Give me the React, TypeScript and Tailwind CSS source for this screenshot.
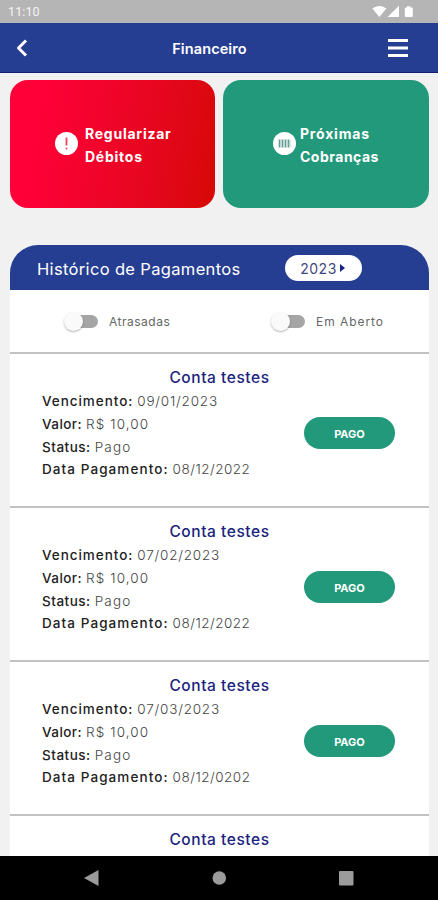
import React from 'react';

type Payment = { due: string; paid: string };

const payments: Payment[] = [
  { due: '09/01/2023', paid: '08/12/2022' },
  { due: '07/02/2023', paid: '08/12/2022' },
  { due: '07/03/2023', paid: '08/12/0202' },
];

function StatusBar() {
  return (
    <div className="flex h-[23px] shrink-0 items-center justify-between bg-[#b5b5b5] pl-2 pr-6">
      <span className="pt-[2px] font-[Roboto,sans-serif] text-[12.5px] leading-none tracking-[0.1px] text-white/85">11:10</span>
      <svg width="42" height="13" viewBox="0 0 42 13" fill="#fff">
        <path d="M.4 3.5C4.4.1 10.300.1 14.300 3.500L7.400 12Z" />
        <path d="M15.500 12H27V.8Z" />
        <path d="M35 1.200h3.500v1.200h1.300q1 0 1 1V11q0 1-1 1h-6q-1 0-1-1V3.400q0-1 1-1H35Z" />
      </svg>
    </div>
  );
}

function Row({ label, value, labelClass, valueClass }: { label: string; value: string; labelClass: string; valueClass: string }) {
  return (
    <p className="flex h-[22.8px] items-center gap-1 whitespace-nowrap text-[13.5px]">
      <span className={`font-medium text-[#222] ${labelClass}`}>{label}</span>
      <span className={`font-light text-[#444] ${valueClass}`}>{value}</span>
    </p>
  );
}

function ItemTitle() {
  return <h2 className="text-center text-[15.500px] font-medium leading-[23px] tracking-[0.55px] text-[#1a237e]">Conta testes</h2>;
}

function PaymentItem({ due, paid }: Payment) {
  return (
    <article className="h-[154px] shrink-0 border-t-2 border-[#c2c2c2] pt-3">
      <ItemTitle />
      <div className="flex justify-between pl-8 pr-[34px]">
        <div className="pt-[0.8px]">
          <Row label="Vencimento:" value={due} labelClass="tracking-[0.95px]" valueClass="tracking-[0.8px]" />
          <Row label="Valor:" value="R$ 10,00" labelClass="tracking-[0.45px]" valueClass="tracking-[1.1px]" />
          <Row label="Status:" value="Pago" labelClass="tracking-[0.5px]" valueClass="tracking-[1.2px]" />
          <Row label="Data Pagamento:" value={paid} labelClass="tracking-[1.08px]" valueClass="tracking-[0.5px]" />
        </div>
        <button className="mt-[28px] flex h-8 w-[91px] items-center justify-center rounded-full bg-[#23997b] pt-[3px] text-[11px] font-bold text-white">PAGO</button>
      </div>
    </article>
  );
}

function Toggle() {
  return (
    <span className="flex h-[20px] w-[35px] items-center">
      <span className="z-10 size-[19px] shrink-0 rounded-full bg-[#fafafa] shadow-[0_1px_2px_rgba(0,0,0,0.3)]" />
      <span className="-ml-[12px] h-[13px] w-[27px] rounded-full bg-[#a5a5a5]" />
    </span>
  );
}

export default function App() {
  return (
    <div className="flex h-[900px] w-[438px] flex-col overflow-hidden bg-[#f1f1f1] font-[Inter,sans-serif]">
      <StatusBar />
      <header className="flex h-[50px] shrink-0 items-center justify-between border-b border-[#101c78] bg-[#263e92] pl-4 pr-[30px] text-white">
        <svg width="12" height="18" viewBox="0 0 12 18" fill="none" stroke="#fff" strokeWidth="3">
          <path d="M10 1.500 2.500 9l7.500 7.500" strokeLinejoin="round" />
        </svg>
        <h1 className="pl-[3px] pt-[3px] text-[14.500px] font-semibold tracking-[0.1px]">Financeiro</h1>
        <svg width="20" height="18" viewBox="0 0 20 18" stroke="#fff" strokeWidth="3">
          <path d="M0 1.500h20M0 9h20M0 16.500h20" />
        </svg>
      </header>

      <div className="mt-[7px] flex h-[128px] shrink-0 gap-2 pl-[10px] pr-[9px]">
        <button className="flex w-[205px] items-center gap-[7px] rounded-[18px] bg-linear-100 from-[#ff0038] from-15% to-[#d90808] to-95% pl-[45px] text-left text-white">
          <svg width="23" height="23" viewBox="0 0 23 23" className="-mt-px">
            <circle cx="11.500" cy="11.500" r="11.500" fill="#fff" />
            <path d="M11.500 5.500v8" stroke="#f04360" strokeWidth="1.800" />
            <circle cx="11.500" cy="16.500" r="1" fill="#f04360" />
          </svg>
          <span className="pt-[1px] text-[14px] font-bold leading-[23px]">
            <span className="tracking-[0.75px]">Regularizar</span><br /><span className="tracking-[0.75px]">Débitos</span>
          </span>
        </button>
        <button className="flex w-[206px] items-center gap-[4px] rounded-[18px] bg-[#23997b] pl-[50px] text-left text-white">
          <svg width="23" height="23" viewBox="0 0 23 23" className="-mt-px">
            <circle cx="11.500" cy="11.500" r="11.500" fill="#fff" />
            <path d="M6.500 7.500v8M9.500 7.500v8M12.500 7.500v8M15.500 7.500v8" stroke="#669f92" strokeWidth="1.700" />
            <path d="M8 7.500v8M11 7.500v8M14 7.500v8M17 7.500v8" stroke="#b5d5cb" strokeWidth="1" />
          </svg>
          <span className="pt-[1px] text-[14px] font-bold leading-[23px]">
            <span className="tracking-[0.8px]">Próximas</span><br /><span className="tracking-[0.5px]">Cobranças</span>
          </span>
        </button>
      </div>

      <main className="ml-[10px] mt-[37px] flex min-h-0 w-[419px] flex-1 flex-col overflow-hidden rounded-t-[28px] bg-white">
        <div className="flex h-[45px] shrink-0 items-center bg-[#263e92] pl-[27px]">
          <span className="w-[248px] whitespace-nowrap pt-1 text-[16.500px] tracking-[0.34px] text-white">Histórico de Pagamentos</span>
          <button className="flex h-[26px] w-[77px] items-center justify-center gap-[3px] rounded-full bg-white pt-[2px] text-[14px] text-[#3f4780]">
            <span className="tracking-[0.5px]">2023</span>
            <svg width="5" height="8" viewBox="0 0 5 8" className="-mt-[2px] mr-[2px]"><path d="M0 0v8l5-4Z" fill="#1a237e" /></svg>
          </button>
        </div>
        <div className="flex h-[62px] shrink-0 items-center pl-[54px] text-[12px] text-[#666]">
          <label className="flex w-[207px] items-center gap-[10px]"><Toggle /><span className="pt-[2px] tracking-[0.5px]">Atrasadas</span></label>
          <label className="flex items-center gap-[10px]"><Toggle /><span className="pt-[2px] tracking-[0.95px]">Em Aberto</span></label>
        </div>
        {payments.map((p) => <PaymentItem key={p.due} {...p} />)}
        <article className="flex-1 border-t-2 border-[#c2c2c2] pt-3">
          <ItemTitle />
        </article>
      </main>

      <nav className="flex h-[44px] shrink-0 items-center bg-black pl-[84px]">
        <svg width="270" height="16" viewBox="0 0 270 16" fill="#9b9b9b">
          <path d="M0 8 14.500 0v16Z" />
          <circle cx="135.300" cy="8" r="6.800" />
          <rect x="255" y="1" width="14.500" height="14.500" rx="1" />
        </svg>
      </nav>
    </div>
  );
}
